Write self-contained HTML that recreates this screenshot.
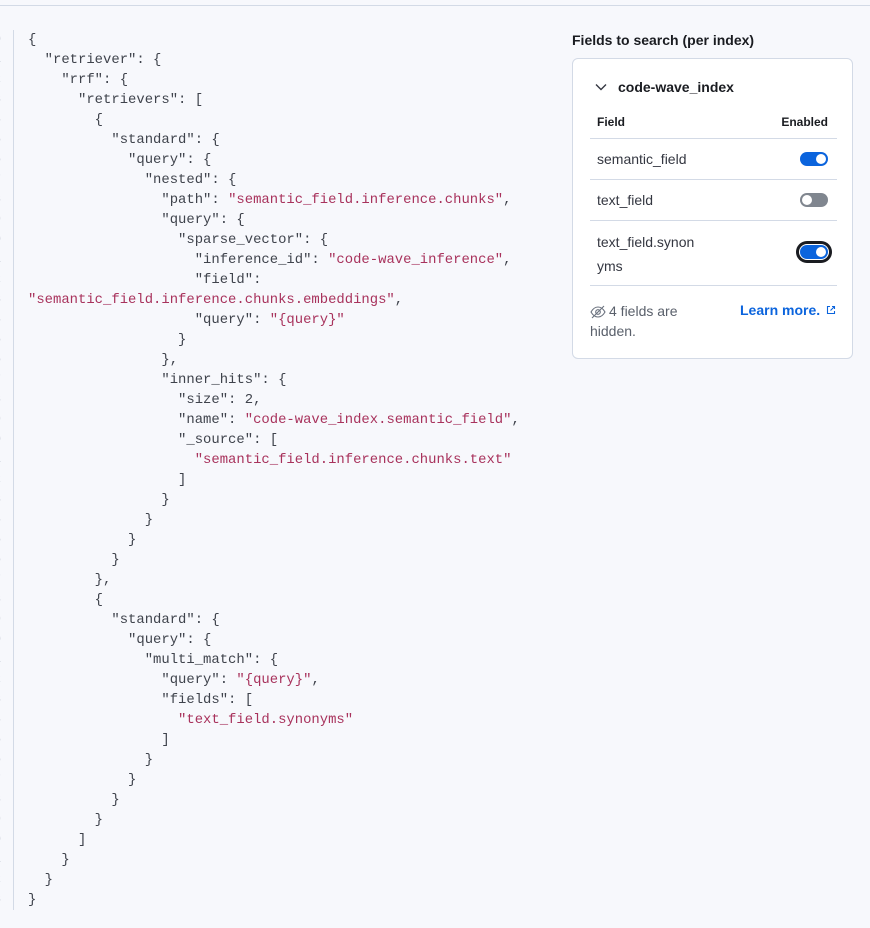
<!DOCTYPE html>
<html><head><meta charset="utf-8"><style>
body{margin:0;width:870px;height:928px;background:#f7f8fc;position:relative;overflow:hidden;font-family:"Liberation Sans",sans-serif;}
.top{position:absolute;left:0;right:0;top:5px;border-top:1px solid #d3dae6;}
.vl{position:absolute;left:13px;top:30px;height:880px;border-left:1px solid #d3dae6;}
pre{position:absolute;left:28px;top:30px;margin:0;font-family:"Liberation Mono",monospace;font-size:13.9px;line-height:20px;color:#3f434c;}
.s{color:#a8325c;}
.ln{position:absolute;left:-9px;top:30px;margin:0;font-family:"Liberation Mono",monospace;font-size:11px;line-height:20px;color:#b8bfcb;text-align:right;width:10px;}
.title{position:absolute;left:572px;top:32px;font-size:14px;font-weight:bold;color:#1a1c21;}
.card{position:absolute;left:572px;top:58px;width:279px;height:299px;border:1px solid #d3dae6;border-radius:6px;background:#fff;}
.card .t{position:absolute;font-size:14px;color:#343741;}
.hr{position:absolute;left:17px;width:247px;border-top:1px solid #d3dae6;}
.tg{position:absolute;left:227px;width:28px;height:14px;border-radius:7px;background:#0b64dd;}
.tg i{position:absolute;right:2px;top:2px;width:10px;height:10px;border-radius:50%;background:#fff;}
.tg.off{background:#80868f;}
.tg.off i{left:2px;right:auto;}
</style></head><body>
<div class="top"></div>
<div class="vl"></div>
<pre class="ln">0
1
2
3
4
5
6
7
8
9
0
1
2
3
4
5
6
7
8
9
0
1
2
3
4
5
6
7
8
9
0
1
2
3
4
5
6
7
8
9
0
1
2
3</pre>
<pre>{
  "retriever": {
    "rrf": {
      "retrievers": [
        {
          "standard": {
            "query": {
              "nested": {
                "path": <span class="s">"semantic_field.inference.chunks"</span>,
                "query": {
                  "sparse_vector": {
                    "inference_id": <span class="s">"code-wave_inference"</span>,
                    "field":
<span class="s">"semantic_field.inference.chunks.embeddings"</span>,
                    "query": <span class="s">"{query}"</span>
                  }
                },
                "inner_hits": {
                  "size": 2,
                  "name": <span class="s">"code-wave_index.semantic_field"</span>,
                  "_source": [
                    <span class="s">"semantic_field.inference.chunks.text"</span>
                  ]
                }
              }
            }
          }
        },
        {
          "standard": {
            "query": {
              "multi_match": {
                "query": <span class="s">"{query}"</span>,
                "fields": [
                  <span class="s">"text_field.synonyms"</span>
                ]
              }
            }
          }
        }
      ]
    }
  }
}</pre>
<div class="title">Fields to search (per index)</div>
<div class="card">
  <svg style="position:absolute;left:22px;top:24px" width="12" height="8" viewBox="0 0 12 8"><path d="M1 1.5l5 5 5-5" fill="none" stroke="#343741" stroke-width="1.4"/></svg>
  <div class="t" style="left:45px;top:20px;font-weight:bold;color:#1a1c21">code-wave_index</div>
  <div class="t" style="left:24px;top:56px;font-size:12px;font-weight:bold;color:#1a1c21">Field</div>
  <div class="t" style="right:24px;top:56px;font-size:12px;font-weight:bold;color:#1a1c21">Enabled</div>
  <div class="hr" style="top:79px"></div>
  <div class="t" style="left:24px;top:92px">semantic_field</div>
  <div class="tg" style="top:93px"><i></i></div>
  <div class="hr" style="top:120px"></div>
  <div class="t" style="left:24px;top:133px">text_field</div>
  <div class="tg off" style="top:134px"><i></i></div>
  <div class="hr" style="top:161px"></div>
  <div class="t" style="left:24px;top:171px;line-height:24px;width:110px">text_field.synon<br>yms</div>
  <div class="tg" style="top:186px;box-shadow:0 0 0 1px #fff,0 0 0 4px #1a1c21"><i></i></div>
  <div class="hr" style="top:226px"></div>
  <svg style="position:absolute;left:17px;top:246px" width="16" height="14" viewBox="0 0 16 14"><path d="M1 7c2-3.5 4.5-5 7-5s5 1.5 7 5c-2 3.5-4.5 5-7 5s-5-1.5-7-5z" fill="none" stroke="#69707d" stroke-width="1.1"/><circle cx="8" cy="7" r="2.3" fill="none" stroke="#69707d" stroke-width="1.1"/><path d="M2 13L14 1" stroke="#69707d" stroke-width="1.1"/></svg>
  <div class="t" style="left:36px;top:242px;color:#5a606b;line-height:20px">4 fields are</div>
  <div class="t" style="left:17px;top:262px;color:#5a606b;line-height:20px">hidden.</div>
  <div class="t" style="left:167px;top:243px;color:#0b64dd;font-weight:bold">Learn more.</div>
  <svg style="position:absolute;left:253px;top:246px" width="10" height="10" viewBox="0 0 10 10"><path d="M4 1.5H1.5v7h7V6M6 1.5h2.5V4M8.5 1.5L4.5 5.5" fill="none" stroke="#0b64dd" stroke-width="1.1"/></svg>
</div>
</body></html>
